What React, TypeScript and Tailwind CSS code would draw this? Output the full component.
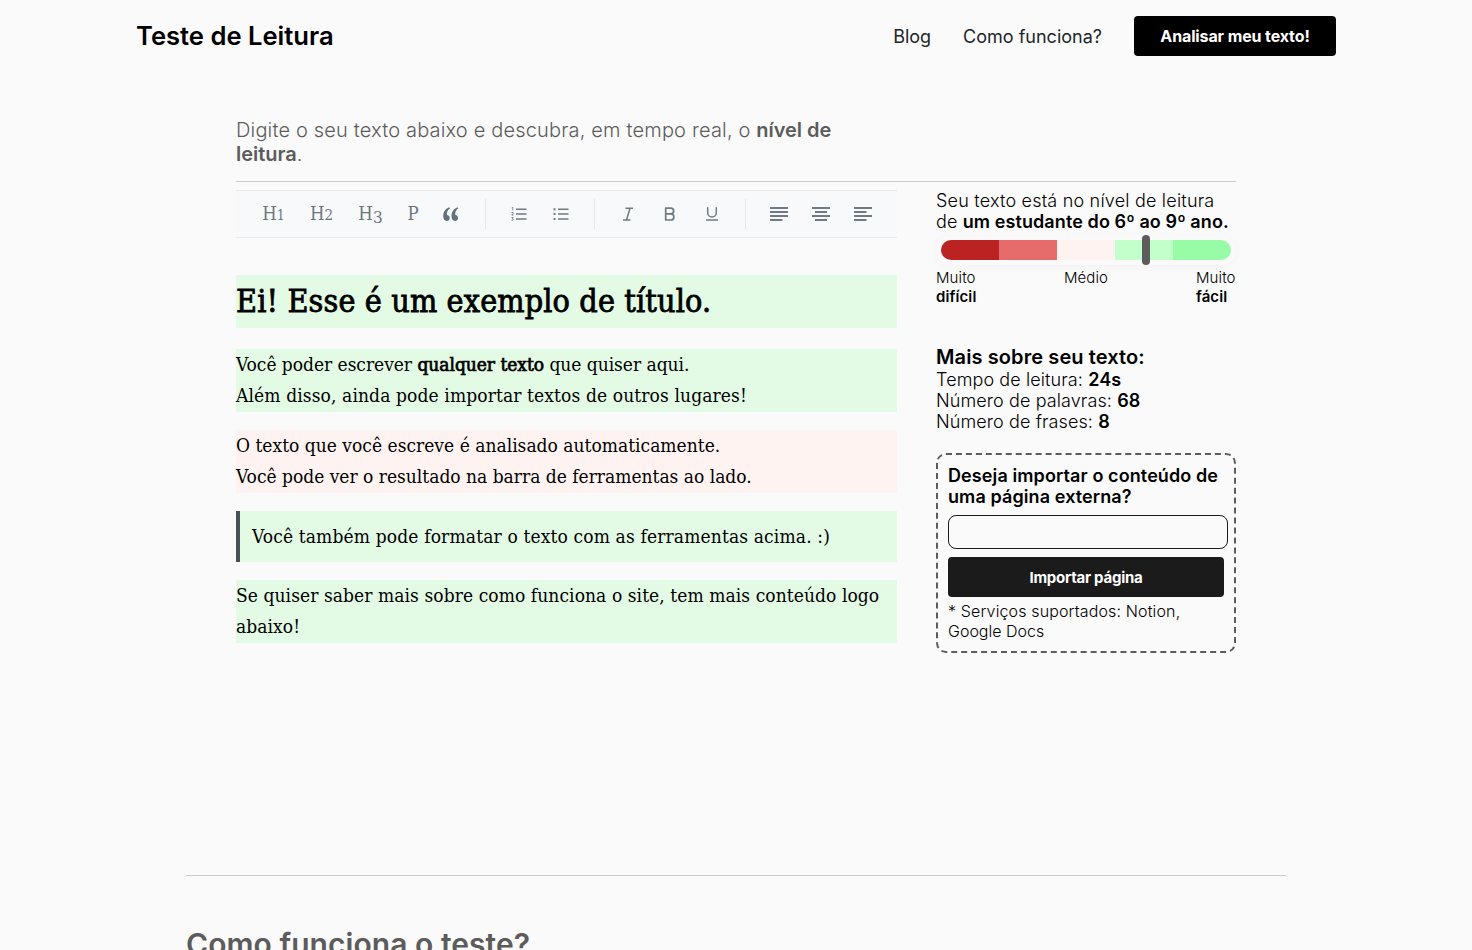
import type { ReactNode } from "react";

const TOOL = "flex items-baseline justify-center text-[#6b7680]";

function Icon({ children, className }: { children: ReactNode; className?: string }) {
  return (
    <svg
      viewBox="0 0 20 20"
      width="20"
      height="20"
      fill="none"
      stroke="currentColor"
      strokeWidth="1.5"
      className={`shrink-0 text-[#6f7a84] ${className ?? ""}`}
    >
      {children}
    </svg>
  );
}

function Divider() {
  return <span className="h-[30px] w-px shrink-0 bg-[#e4e8ec]" />;
}

function Toolbar() {
  return (
    <div className="flex h-12 items-center border-y border-[#e7eaed] bg-[#f8f9fb] font-['DejaVu_Serif_Condensed','DejaVu_Serif',serif] text-[18.5px]">
      <div className="flex w-[249px] items-center pl-[26px]">
        <span className={`${TOOL} w-[23px]`}>H<span className="text-[14px]">1</span></span>
        <span className={`${TOOL} ml-6 w-[25px]`}>H<span className="text-[15px]">2</span></span>
        <span className={`${TOOL} ml-6 w-[25px]`}>H<span className="translate-y-[3px] text-[17px]">3</span></span>
        <span className={`${TOOL} ml-6 w-[12px]`}>P</span>
        <svg viewBox="0 0 16 14" width="16" height="14" className="ml-6 text-[#66717b]" fill="currentColor">
          <path d="M6 .2C2.500 1.700.2 4.700.2 9.300.2 12.200 1.700 13.900 3.700 13.900 5.500 13.900 6.700 12.700 6.700 10.900 6.700 9.200 5.600 8 4 7.900 3.600 5.400 4.700 2.800 7.100 1.200Z" />
          <path d="M14.300 .2C10.800 1.700 8.500 4.700 8.500 9.300 8.500 12.200 10 13.900 12 13.900 13.800 13.900 15 12.700 15 10.900 15 9.200 13.900 8 12.300 7.900 11.900 5.400 13 2.800 15.400 1.200Z" />
        </svg>
      </div>
      <Divider />
      <div className="flex w-[108px] items-center pl-[23px]">
        <Icon>
          <path d="M7 5.200h10.500M7 10h10.500M7 15h10.500" />
          <path strokeWidth=".9" d="M2.800 3.800l1-.4v2.900M2.500 8.600h1.700v.8l-1.500 1.700h1.800M2.500 13.600h1.800l-1 1.200c1.400 0 1.300 1.700-.8 1.500" />
        </Icon>
        <Icon className="ml-[22px]">
          <path d="M7 5.200h10.500M7 10h10.500M7 15h10.500" />
          <path strokeWidth="2" d="M2.500 5.200h2M2.500 10h2M2.500 15h2" />
        </Icon>
      </div>
      <Divider />
      <div className="flex w-[150px] items-center pl-[23px]">
        <Icon>
          <path d="M7.500 4.200H15M5 16h7.500M12 4.200 8.500 16" />
        </Icon>
        <Icon className="ml-[22px]">
          <path strokeWidth="1.700" d="M5.700 4.200v11.800M5 4.200h5.800a2.800 2.800 0 0 1 0 5.700H5.700M10.800 9.900a3.050 3.050 0 0 1 0 6.100H5" />
        </Icon>
        <Icon className="ml-[22px]">
          <path d="M5.700 3.300v5.500a4.300 4.300 0 0 0 8.600 0V3.300M4 16.100h12" />
        </Icon>
      </div>
      <Divider />
      <div className="flex items-center pl-[23px]">
        <Icon>
          <path strokeWidth="2" d="M1 4h18M1 8h18M1 12h18M1 16h12.500" />
        </Icon>
        <Icon className="ml-[22px]">
          <path strokeWidth="2" d="M1 4h18M4 8h12M1 12h18M4 16h12" />
        </Icon>
        <Icon className="ml-[22px]">
          <path strokeWidth="2" d="M1 4h18M1 8h12.500M1 12h18M1 16h12.500" />
        </Icon>
      </div>
    </div>
  );
}

function Editor() {
  return (
    <div className="mt-[37px] font-['DejaVu_Serif_Condensed','DejaVu_Serif',serif] text-[19px] leading-[31px] whitespace-nowrap text-black">
      <h1 className="h-[53px] bg-[#e3fae5] text-[32px] leading-[53px] [-webkit-text-stroke:0.8px_black]">
        <span className="tracking-[0.13px]">Ei! Esse é um exemplo de título.</span>
      </h1>
      <p className="mt-[21px] h-[63px] bg-[#e3fae5]">
        <span className="tracking-[-0.03px]">
          Você poder escrever <span className="[-webkit-text-stroke:0.7px_black]">qualquer texto</span> que quiser aqui.
        </span>
        <br />
        <span className="tracking-[0.12px]">Além disso, ainda pode importar textos de outros lugares!</span>
      </p>
      <p className="mt-[18px] h-[63px] bg-[#fff3f2]">
        <span className="tracking-[0.02px]">O texto que você escreve é analisado automaticamente.</span>
        <br />
        <span>Você pode ver o resultado na barra de ferramentas ao lado.</span>
      </p>
      <blockquote className="mt-[18px] h-[51px] border-l-4 border-[#495057] bg-[#e3fae5] pl-3 leading-[51px]">
        <span className="tracking-[0.15px]">Você também pode formatar o texto com as ferramentas acima. :)</span>
      </blockquote>
      <p className="mt-[18px] h-[63px] bg-[#e3fae5]">
        <span className="tracking-[0.08px]">Se quiser saber mais sobre como funciona o site, tem mais conteúdo logo</span>
        <br />
        <span className="tracking-[0.08px]">abaixo!</span>
      </p>
    </div>
  );
}

function Sidebar() {
  return (
    <aside className="w-[300px] pt-2 text-[18px] leading-[21px] font-light tracking-[0.1px] whitespace-nowrap text-black">
      <p>
        <span className="tracking-[0.2px]">Seu texto está no nível de leitura</span>
        <br />
        <span>
          de <b className="font-semibold">um estudante do 6º ao 9º ano.</b>
        </span>
      </p>
      <div className="relative mt-[3px] flex h-[30px] items-center rounded-full px-[5px] shadow-[0_2px_10px_rgba(0,0,0,0.03)]">
        <div className="flex h-5 w-full overflow-hidden rounded-full">
          <span className="flex-1 bg-[#bb2222]" />
          <span className="flex-1 bg-[#e66c6c]" />
          <span className="flex-1 bg-[#fff3f2]" />
          <span className="flex-1 bg-[#c3ffca]" />
          <span className="flex-1 bg-[#98fca6]" />
        </div>
        <span className="absolute top-0 left-[206px] h-[30px] w-2 rounded-[4px] bg-[#5c5c5c]" />
      </div>
      <div className="mt-[3px] flex justify-between text-[15px] leading-[19px]">
        <span className="w-10">Muito<br /><b className="font-semibold">difícil</b></span>
        <span>Médio</span>
        <span className="w-10">Muito<br /><b className="font-semibold">fácil</b></span>
      </div>
      <div className="mt-[39px]">
        <h2 className="text-[20px] leading-6 font-semibold">Mais sobre seu texto:</h2>
        <p>Tempo de leitura: <b className="font-semibold">24s</b></p>
        <p>Número de palavras: <b className="font-semibold">68</b></p>
        <p>Número de frases: <b className="font-semibold">8</b></p>
      </div>
      <div className="mt-[21px] h-[200px] rounded-[10px] border-2 border-dashed border-[#5c5c5c] p-[10px]">
        <p className="font-semibold">Deseja importar o conteúdo de<br />uma página externa?</p>
        <input aria-label="URL" className="mt-2 block h-[34px] w-[280px] rounded-[8px] border border-[#1b1b1b] bg-transparent px-2" />
        <button className="mt-2 block h-10 w-full rounded-[4px] bg-[#1b1b1b] text-[15px] font-bold tracking-[-0.25px] text-white">Importar página</button>
        <p className="mt-1 text-[16px] leading-5 tracking-[0.14px]">* Serviços suportados: Notion,<br /><span className="tracking-normal">Google Docs</span></p>
      </div>
    </aside>
  );
}

export default function App() {
  return (
    <div className="h-[950px] overflow-hidden bg-[#fafafa] font-['Inter',sans-serif] text-black">
      <header className="mx-auto flex h-[72px] w-[1200px] items-center justify-between">
        <span className="text-[25.6px] leading-8 font-semibold">Teste de Leitura</span>
        <nav className="flex items-center text-[18px] text-[#212529]">
          <a>Blog</a>
          <a className="ml-8">Como funciona?</a>
          <button className="ml-8 h-10 w-[202px] rounded-[4px] bg-black text-[16px] font-bold tracking-[-0.12px] text-white">Analisar meu texto!</button>
        </nav>
      </header>
      <main className="mx-auto w-[1000px]">
        <h2 className="h-[110px] border-b border-[#c9cccb] pt-[46px] text-[20px] leading-6 font-light text-[#5c5c5c]">
          <span className="tracking-[0.17px]">Digite o seu texto abaixo e descubra, em tempo real, o <b className="font-semibold tracking-[-0.05px]">nível de</b></span>
          <br />
          <b className="font-semibold">leitura</b>.
        </h2>
        <div className="flex h-[693px] justify-between">
          <div className="w-[661px] pt-2">
            <Toolbar />
            <Editor />
          </div>
          <Sidebar />
        </div>
      </main>
      <section className="mx-auto w-[1100px] border-t border-[#c9cccb] pt-[50px]">
        <h2 className="text-[30px] leading-9 font-semibold tracking-[0.05px] text-[#5c5c5c]">Como funciona o teste?</h2>
      </section>
    </div>
  );
}
